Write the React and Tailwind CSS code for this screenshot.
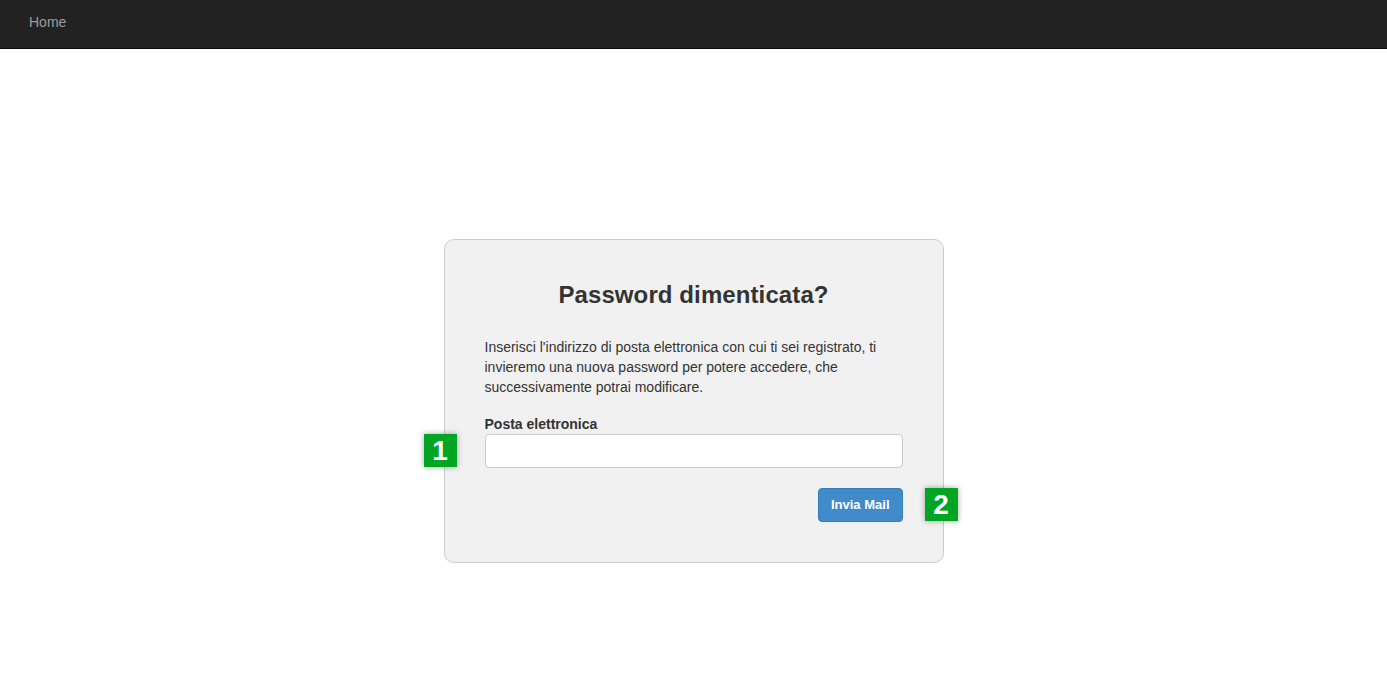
export default function App() {
  return (
    <div className="min-h-[700px] bg-white font-['Liberation_Sans',Arial,sans-serif] text-[#333]">
      {/* Navbar */}
      <nav className="h-[49px] bg-[#222] border-b border-[#080808] flex items-center px-[29px] pb-[3px]">
        <a className="text-[14px] text-[#9d9d9d]">Home</a>
      </nav>

      {/* Card */}
      <div className="flex justify-center pt-[190px]">
        <div className="relative w-[500px] bg-[#f1f1f1] border border-[#ccc] rounded-[10px] px-[40px] pt-[42px] pb-[40px]">
          <h3 className="text-[24px] font-bold text-center leading-[26px] tracking-[0.1px]">Password dimenticata?</h3>

          <p className="mt-[29px] text-[14px] leading-[20px]">
            Inserisci l'indirizzo di posta elettronica con cui ti sei registrato, ti invieremo una nuova password per potere accedere, che successivamente potrai modificare.
          </p>

          <label className="block mt-[17px] text-[14px] font-bold leading-[20px]">Posta elettronica</label>
          <div className="relative">
            <input
              type="text"
              className="block w-full h-[34px] bg-white border border-[#ccc] rounded-[4px] px-3 text-[14px] outline-none"
            />
            <span className="absolute left-[-61px] top-0 w-[33px] h-[33px] bg-[#00a523] text-white text-[28px] font-bold flex items-center justify-center shadow-[0_0_6px_rgba(0,0,0,0.35)]">
              1
            </span>
          </div>

          <div className="relative flex justify-end mt-[20px]">
            <button className="h-[34px] px-[12px] bg-[#428bca] border border-[#357ebd] rounded-[4px] text-white text-[13px] font-bold">
              Invia Mail
            </button>
            <span className="absolute right-[-55px] top-0 w-[33px] h-[33px] bg-[#00a523] text-white text-[28px] font-bold flex items-center justify-center shadow-[0_0_6px_rgba(0,0,0,0.35)]">
              2
            </span>
          </div>
        </div>
      </div>
    </div>
  );
}
